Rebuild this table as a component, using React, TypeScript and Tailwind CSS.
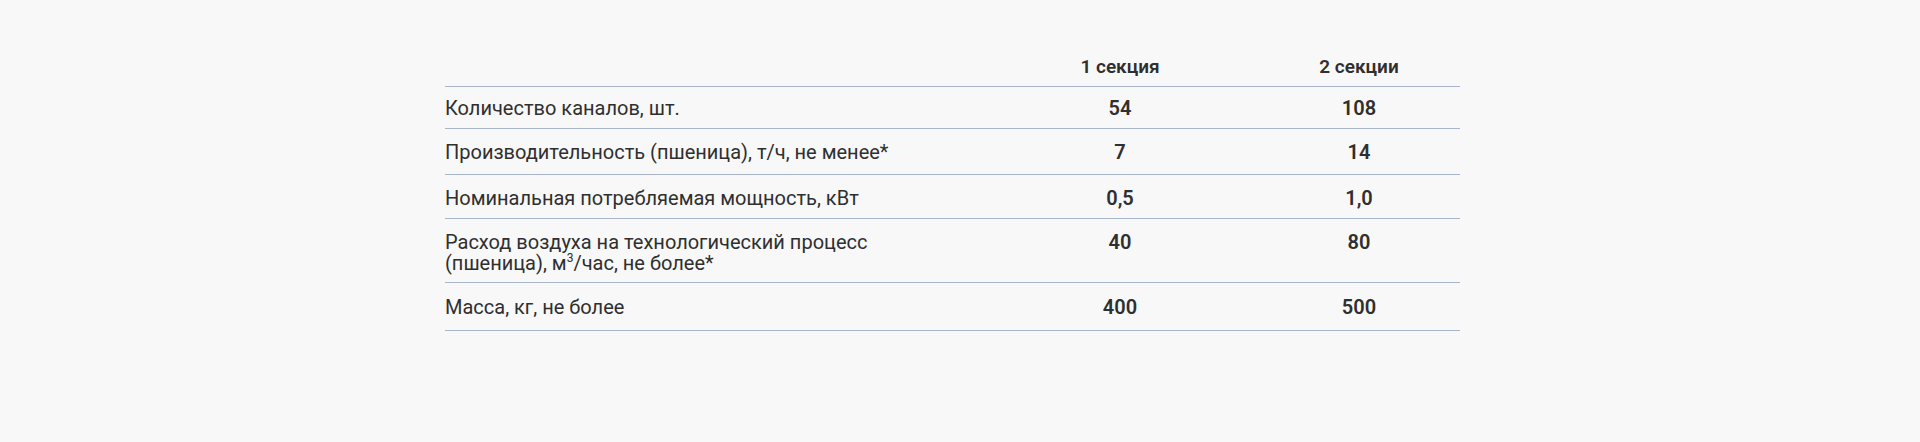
import React from "react";

type Row = { label: React.ReactNode; a: string; b: string; pad: string };

const rows: Row[] = [
  { label: "Количество каналов, шт.", a: "54", b: "108", pad: "pt-[11px] pb-[9px]" },
  { label: "Производительность (пшеница), т/ч, не менее*", a: "7", b: "14", pad: "pt-[13px] pb-[11px]" },
  { label: "Номинальная потребляемая мощность, кВт", a: "0,5", b: "1,0", pad: "pt-[13px] pb-[9px]" },
  {
    label: (
      <>
        Расход воздуха на технологический процесс
        <br />
        (пшеница), м<sup className="top-[-0.7em] text-[12px]">3</sup>/час, не более*
      </>
    ),
    a: "40",
    b: "80",
    pad: "pt-[13px] pb-[8px]",
  },
  { label: "Масса, кг, не более", a: "400", b: "500", pad: "pt-[14px] pb-[12px]" },
];

export default function App() {
  return (
    <div
      className="min-h-[442px] w-full bg-[#f8f8f8] pt-[56px] text-[#2f2f2f]"
      style={{ fontFamily: "Roboto, 'Noto Sans', sans-serif" }}
    >
      <table className="ml-[445px] w-[1015px] table-fixed border-collapse">
        <colgroup>
          <col className="w-[537px]" />
          <col className="w-[276px]" />
          <col className="w-[202px]" />
        </colgroup>
        <thead>
          <tr className="border-b border-[#a9b5cb]">
            <th className="pb-[9px]" />
            <th className="pb-[9px] text-center text-[19px] font-semibold leading-[21px]">1 секция</th>
            <th className="pb-[9px] text-center text-[19px] font-semibold leading-[21px]">2 секции</th>
          </tr>
        </thead>
        <tbody>
          {rows.map((r, i) => (
            <tr key={i} className="border-b border-[#a9b5cb] align-top">
              <td className={`${r.pad} text-left text-[20px] leading-[21px]`}>{r.label}</td>
              <td className={`${r.pad} text-center text-[20px] font-semibold leading-[21px]`}>{r.a}</td>
              <td className={`${r.pad} text-center text-[20px] font-semibold leading-[21px]`}>{r.b}</td>
            </tr>
          ))}
        </tbody>
      </table>
    </div>
  );
}
